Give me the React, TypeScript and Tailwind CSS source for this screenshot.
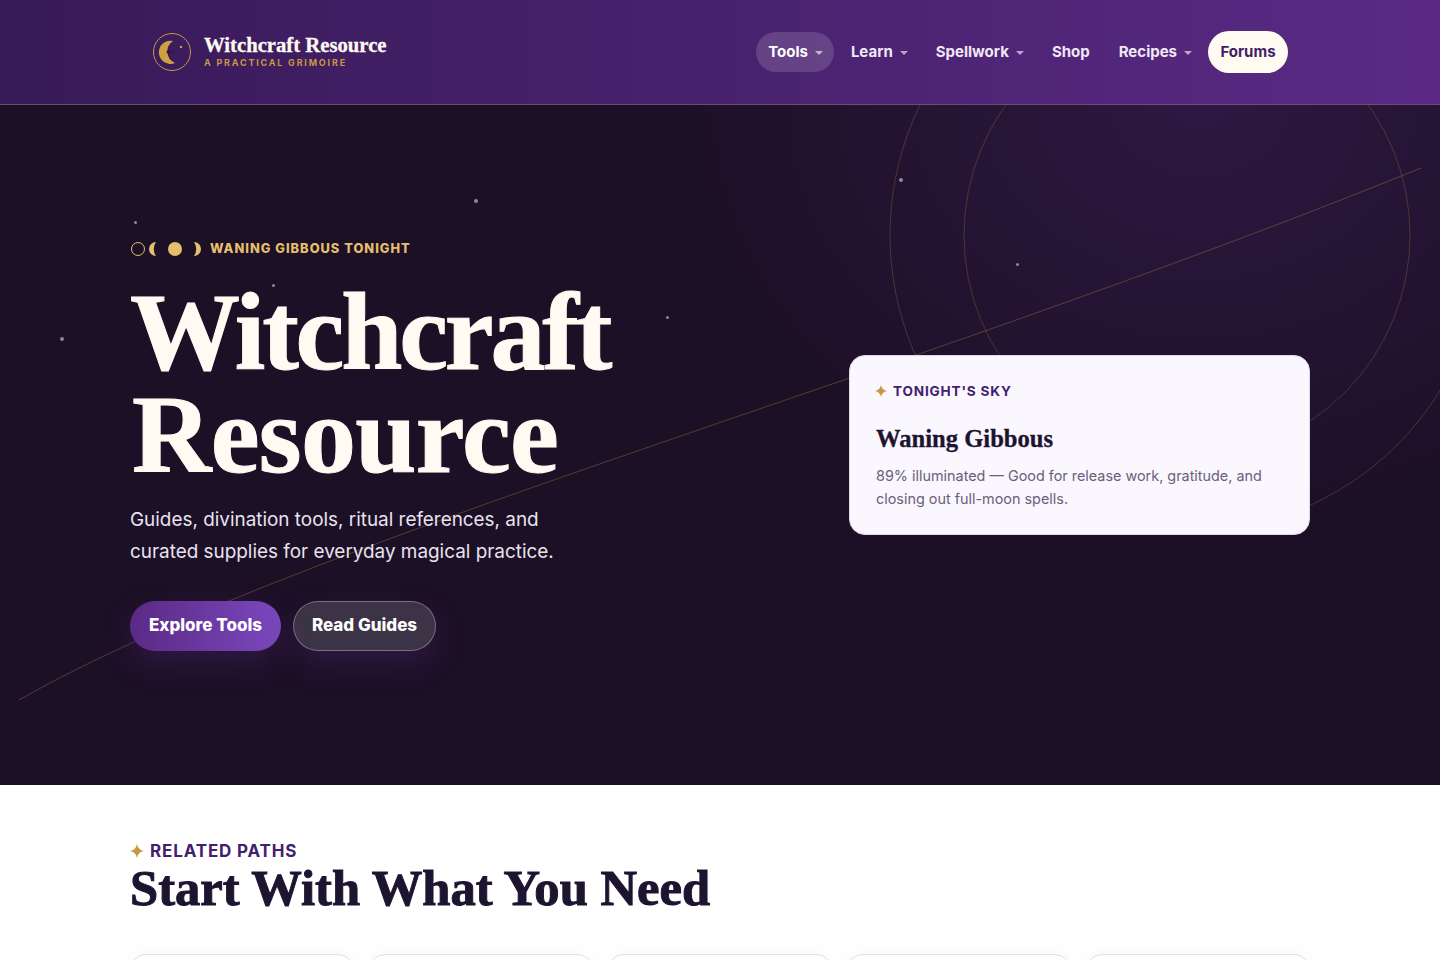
const serif = 'font-["Liberation_Serif",serif]';

const navItems = [
  { label: 'Tools', caret: true, active: true },
  { label: 'Learn', caret: true },
  { label: 'Spellwork', caret: true },
  { label: 'Shop' },
  { label: 'Recipes', caret: true },
];

const stars = [
  { x: 'left-[134px] top-[116px]', s: 'size-[3px]' },
  { x: 'left-[474px] top-[94px]', s: 'size-[4px]' },
  { x: 'left-[272px] top-[179px]', s: 'size-[3px]' },
  { x: 'left-[666px] top-[211px]', s: 'size-[3px]' },
  { x: 'left-[60px] top-[232px]', s: 'size-[4px]' },
  { x: 'left-[899px] top-[73px]', s: 'size-[4px]' },
  { x: 'left-[1016px] top-[158px]', s: 'size-[3px]' },
];

function Logo() {
  return (
    <svg width="40" height="40" viewBox="0 0 40 40" fill="none">
      <circle cx="20" cy="20" r="18.5" stroke="#c9973f" strokeWidth="1" />
      <path d="M21 9 A11.6 11.6 0 1 0 23 31 A12.5 12.5 0 0 1 21 9 Z" fill="#cfa040" />
      <path d="M15 20 h7.5 M17.5 18 l-2.5 2 l2.5 2" stroke="#2a1245" strokeWidth="1.2" />
      <circle cx="29" cy="15" r="1.3" fill="#c9973f" />
    </svg>
  );
}

function Phases() {
  return (
    <svg width="72" height="16" viewBox="0 0 72 16" className="shrink-0">
      <circle cx="8" cy="8" r="6.5" fill="none" stroke="#e6bf6e" strokeWidth="1" />
      <path d="M26 1 A7 7 0 0 0 26 15 A12 12 0 0 1 26 1 Z" fill="#e6bf6e" />
      <circle cx="45" cy="8" r="7" fill="#e6bf6e" />
      <path d="M64 1 A7 7 0 0 1 64 15 A12 12 0 0 0 64 1 Z" fill="#e6bf6e" />
    </svg>
  );
}

function Sparkle({ className }: { className: string }) {
  return (
    <svg viewBox="0 0 12 12" className={className} fill="#c9973f">
      <path d="M6 0 C6.6 3.4 8.6 5.4 12 6 C8.6 6.6 6.6 8.6 6 12 C5.4 8.6 3.4 6.6 0 6 C3.4 5.4 5.4 3.4 6 0 Z" />
    </svg>
  );
}

function Backdrop() {
  return (
    <svg width="1440" height="680" viewBox="0 105 1440 680" className="pointer-events-none absolute inset-0" fill="none">
      <circle cx="1187" cy="235" r="297" stroke="#c9973f" strokeOpacity="0.25" />
      <circle cx="1187" cy="235" r="223" stroke="#c9973f" strokeOpacity="0.25" />
      <path d="M19 700 C300 540 900 380 1421 168" stroke="#c9973f" strokeOpacity="0.32" />
    </svg>
  );
}

export default function App() {
  return (
    <div className="h-[960px] overflow-hidden bg-white font-['Inter',sans-serif]">
      <header className="h-[105px] border-b border-[#6f4a72] bg-linear-to-r from-[#371a58] to-[#5a2a85]">
        <div className="mx-auto flex h-full w-[1180px] items-center justify-between px-[22px]">
          <div className="flex items-center gap-3">
            <Logo />
            <div>
              <div className={`${serif} text-[20.7px] leading-[22px] font-bold text-[#fffaf2] [-webkit-text-stroke:0.3px_#fffaf2]`}>Witchcraft Resource</div>
              <div className="text-[9px] leading-[14px] font-bold tracking-[0.2em] text-[#c9973f]">A PRACTICAL GRIMOIRE</div>
            </div>
          </div>
          <nav className="flex items-center gap-[5px]">
            {navItems.map((n) => (
              <a
                key={n.label}
                className={`flex h-10 items-center gap-[7px] rounded-[20px] pl-3 text-[15px] font-bold ${n.caret ? 'pr-[11px]' : 'pr-3'} ${n.active ? 'bg-white/15 text-white' : 'text-[#f0e8f6]'}`}
              >
                {n.label}
                {n.caret && <span className="mt-px h-0 w-0 border-x-4 border-t-[4px] border-x-transparent border-t-white/60" />}
              </a>
            ))}
            <a className="flex h-[42px] w-20 items-center justify-center rounded-[21px] bg-[#fffaf2] text-[15px] font-bold text-[#3f1e68]">Forums</a>
          </nav>
        </div>
      </header>

      <section className="relative h-[680px] overflow-hidden bg-[#1c1026]">
        <div className="absolute inset-0 bg-[radial-gradient(ellipse_520px_420px_at_1200px_0px,#2e1842,transparent)]" />
        <Backdrop />
        {stars.map((s) => (
          <span key={s.x} className={`absolute rounded-full bg-white/50 ${s.x} ${s.s}`} />
        ))}
        <div className="relative mx-auto flex h-full w-[1180px] items-center justify-between">
          <div>
            <div className="flex items-center gap-2">
              <Phases />
              <span className="text-[12.8px] font-extrabold tracking-[0.08em] text-[#e6bf6e]">WANING GIBBOUS TONIGHT</span>
            </div>
            <h1 className={`${serif} mt-[22px] text-[110px] leading-[103px] font-bold tracking-[-3.2px] text-[#fffaf2] [-webkit-text-stroke:1px_#fffaf2]`}>
              Witchcraft
              <br />
              <span className="ml-[2px] tracking-[-0.7px]">Resource</span>
            </h1>
            <p className="mt-[17px] max-w-[440px] text-[18.9px] leading-8 text-[#e9e3ef]">
              Guides, divination tools, ritual references, and curated supplies for everyday magical practice.
            </p>
            <div className="mt-[33px] flex gap-3">
              <a className="flex h-[50px] w-[151px] items-center justify-center rounded-full bg-linear-to-r from-[#5b2a86] to-[#7a48bd] text-[17px] font-extrabold text-white shadow-[0_12px_30px_rgba(91,42,134,0.3)]">
                Explore Tools
              </a>
              <a className="flex h-[50px] w-[143px] items-center justify-center rounded-full border border-white/30 bg-white/15 text-[17px] font-extrabold text-white shadow-[0_12px_30px_rgba(91,42,134,0.3)]">
                Read Guides
              </a>
            </div>
          </div>
          <div className="h-[180px] w-[461px] rounded-2xl border border-[#e0d8ea] bg-[#faf7ff] px-[26px] pt-[25px]">
            <div className="flex items-center gap-[6px]">
              <Sparkle className="-ml-px size-3" />
              <span className="text-[13.6px] leading-5 font-bold tracking-[0.06em] text-[#43206e]">TONIGHT&apos;S SKY</span>
            </div>
            <h2 className={`${serif} mt-5 text-[24.6px] leading-9 font-bold text-[#1d1530] [-webkit-text-stroke:0.3px_#1d1530]`}>Waning Gibbous</h2>
            <p className="mt-[7px] text-[14.4px] leading-[23px] text-[#6a6078]">
              89% illuminated — Good for release work, gratitude, and closing out full-moon spells.
            </p>
          </div>
        </div>
      </section>

      <section className="mx-auto w-[1180px] pt-[56px]">
        <div className="flex items-center gap-[6px]">
          <Sparkle className="size-[14px]" />
          <span className="text-[17px] leading-5 font-bold tracking-[0.05em] text-[#43206e]">RELATED PATHS</span>
        </div>
        <h2 className={`${serif} -mt-px text-[50.6px] leading-[56px] font-bold text-[#1d1530] [-webkit-text-stroke:1px_#1d1530]`}>Start With What You Need</h2>
        <div className="mt-[38px] grid grid-cols-5 gap-[15px]">
          {[0, 1, 2, 3, 4].map((i) => (
            <div key={i} className="h-[200px] rounded-2xl border border-[#e4dcf0] bg-white shadow-[0_0_20px_rgba(60,30,100,0.04)]" />
          ))}
        </div>
      </section>
    </div>
  );
}
